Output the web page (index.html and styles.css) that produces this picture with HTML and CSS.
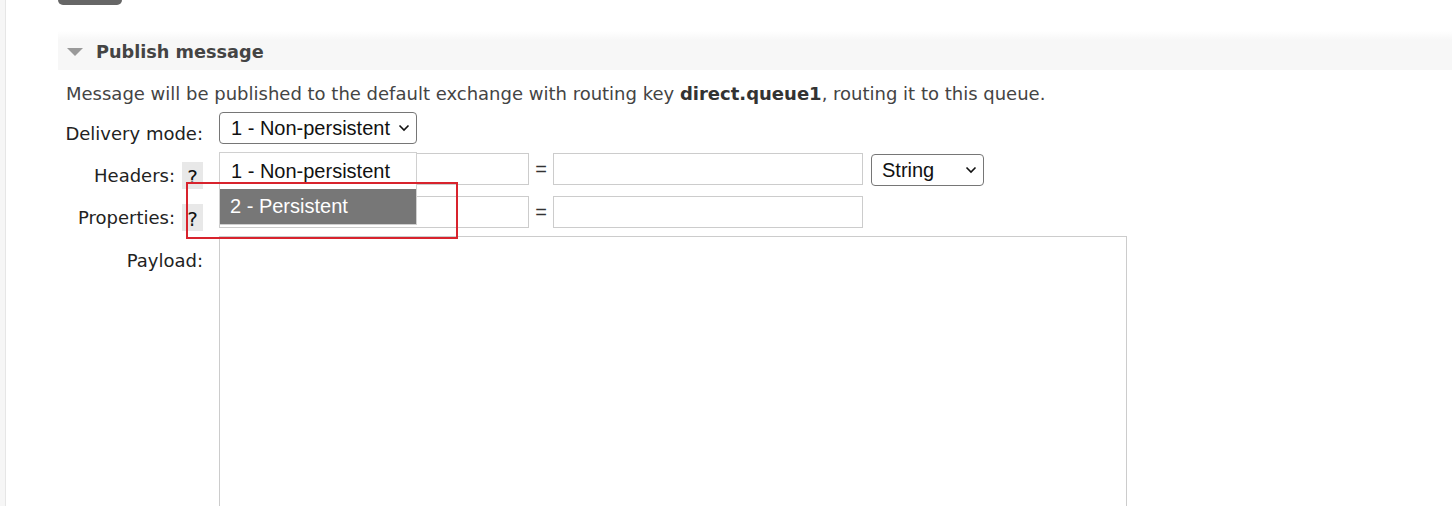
FILE: index.html
```html
<!DOCTYPE html>
<html lang="en">
<head>
<meta charset="utf-8">
<title>Publish message</title>
<link rel="stylesheet" href="styles.css">
</head>
<body>
<div class="page">
  <div class="rail"></div>
  <main class="main">
    <div class="topbtn"></div>
    <section class="section">
      <h2 class="section-head"><span class="tri"></span>Publish message</h2>
      <div class="section-body">
        <p class="desc">Message will be published to the default exchange with routing key <b>direct.queue1</b>, routing it to this queue.</p>
        <div class="form">
          <div class="lbl lbl-dm">Delivery mode:</div>
          <div class="fld fld-dm">
            <div class="sel sel-dm">
              <span class="sel-text">1 - Non-persistent</span>
              <svg class="chev" width="12" height="8" viewBox="0 0 12 8"><path d="M1.5 1.5 L6 6 L10.5 1.5" fill="none" stroke="#111" stroke-width="1.6"/></svg>
            </div>
            <div class="dropdown">
              <div class="opt">1 - Non-persistent</div>
              <div class="opt opt-active">2 - Persistent</div>
            </div>
            <div class="redbox"></div>
          </div>

          <div class="lbl lbl-h"><span>Headers:</span><span class="help">?</span></div>
          <div class="fld fld-row">
            <input class="txt" type="text">
            <span class="eq">=</span>
            <input class="txt" type="text">
            <div class="sel sel-type">
              <span class="sel-text">String</span>
              <svg class="chev" width="12" height="8" viewBox="0 0 12 8"><path d="M1.5 1.5 L6 6 L10.5 1.5" fill="none" stroke="#111" stroke-width="1.6"/></svg>
            </div>
          </div>

          <div class="lbl lbl-p"><span>Properties:</span><span class="help">?</span></div>
          <div class="fld fld-row fld-p">
            <input class="txt" type="text">
            <span class="eq">=</span>
            <input class="txt" type="text">
          </div>

          <div class="lbl lbl-pl">Payload:</div>
          <div class="fld fld-pl">
            <textarea class="payload"></textarea>
          </div>
        </div>
      </div>
    </section>
  </main>
</div>
</body>
</html>
```

FILE: styles.css
```css
* { box-sizing: border-box; }
html, body { margin: 0; padding: 0; background: #fff; }
body {
  font-family: "DejaVu Sans", Verdana, sans-serif;
  color: #222;
  height: 506px;
  overflow: hidden;
}
.page { display: flex; height: 506px; overflow: hidden; }
.rail {
  width: 6px;
  flex: none;
  background: #f6f6f6;
  border-right: 1px solid #e6e6e6;
}
.main { flex: 1; padding-left: 52px; }
.topbtn {
  width: 64px;
  height: 5px;
  background: #666;
  border-radius: 0 0 6px 6px;
}
.section { margin-top: 26px; }
.section-head {
  margin: 0;
  height: 39px;
  display: flex;
  align-items: center;
  padding: 3px 0 0 9px;
  font-size: 17.7px;
  font-weight: bold;
  color: #444;
  background: linear-gradient(to bottom, #fff 0, #f7f7f7 9px, #f7f7f7 100%);
}
.tri {
  width: 0; height: 0;
  border-left: 8px solid transparent;
  border-right: 8px solid transparent;
  border-top: 8px solid #9a9a9a;
  margin-right: 13px;
  margin-top: -1px;
}
.section-body { padding: 13px 0 0 8px; }
.desc {
  margin: 0;
  font-size: 18px;
  line-height: 22px;
  color: #444;
  white-space: nowrap;
}
.desc b { color: #333; }
.form {
  margin-top: 7px;
  display: grid;
  grid-template-columns: 137px 1fr;
  column-gap: 16px;
}
.lbl {
  font-size: 18px;
  line-height: 21px;
  text-align: right;
  color: #222;
  display: flex;
  justify-content: flex-end;
  align-items: flex-start;
  white-space: nowrap;
}
.lbl-dm { padding-top: 11px; }
.lbl-h { padding-top: 12px; }
.lbl-p { padding-top: 11px; }
.lbl-pl { padding-top: 14px; }
.help {
  width: 21px;
  height: 27px;
  margin-left: 7px;
  margin-top: -3px;
  background: #e8e8e8;
  color: #111;
  display: flex;
  align-items: center;
  justify-content: center;
  font-size: 20px;
  padding-top: 3px;
}
.fld { position: relative; }
.fld-dm { height: 41px; }
.fld-row { display: flex; align-items: flex-start; height: 43px; }
.fld-p { height: 40px; }
.sel {
  display: flex;
  align-items: center;
  justify-content: space-between;
  border: 1px solid #767676;
  border-radius: 4px;
  background: #fff;
  font-family: "Liberation Sans", Arial, sans-serif;
  font-size: 20px;
  color: #111;
}
.sel-dm { width: 198px; height: 32px; padding: 0 6px 0 11px; }
.sel-type { width: 113px; height: 32px; padding: 0 6px 0 10px; margin-left: 8px; margin-top: 1px; }
.chev { flex: none; }
.txt {
  width: 310px;
  height: 32px;
  border: 1px solid #ccc;
  margin: 0;
  padding: 0;
  background: #fff;
  outline: none;
}
.eq {
  width: 24px;
  text-align: center;
  font-family: "Liberation Sans", Arial, sans-serif;
  font-size: 20px;
  line-height: 32px;
  color: #333;
}
.payload {
  display: block;
  width: 908px;
  height: 272px;
  border: 1px solid #ccc;
  border-bottom: 0;
  margin: 0;
  resize: none;
}
.dropdown {
  position: absolute;
  left: 0;
  top: 40px;
  width: 198px;
  z-index: 5;
  background: #fff;
  border: 1px solid #d0d0d0;
  font-family: "Liberation Sans", Arial, sans-serif;
  font-size: 20px;
  color: #111;
}
.opt { height: 36px; line-height: 36px; padding-left: 11px; }
.opt-active { background: #777; color: #fff; padding-left: 10px; height: 35px; line-height: 35px; }
.redbox {
  position: absolute;
  left: -33px;
  top: 70px;
  width: 272px;
  height: 57px;
  border: 2px solid #d8232d;
  z-index: 6;
}
```
